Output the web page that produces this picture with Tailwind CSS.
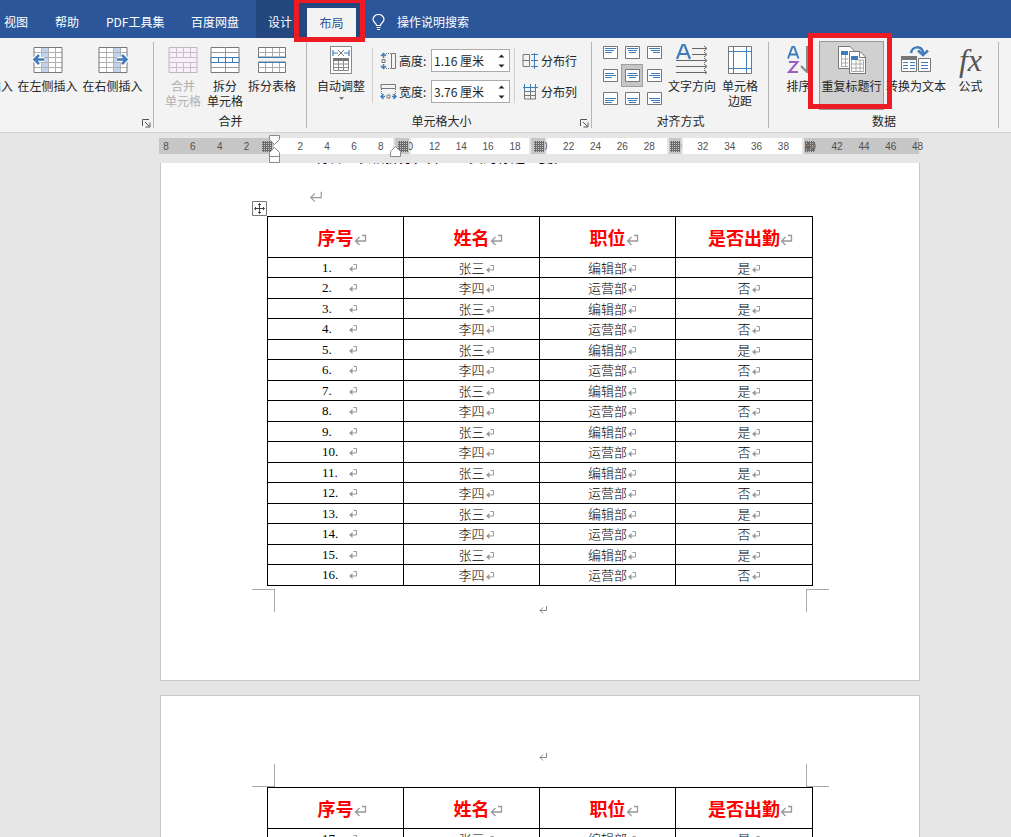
<!DOCTYPE html>
<html lang="zh-CN">
<head>
<meta charset="utf-8">
<title>Word 文档</title>
<script src="https://cdn.jsdelivr.net/npm/@tailwindcss/browser@4"></script>
</head>
<body class="flex h-screen flex-col overflow-hidden bg-[#e6e6e6] font-['Noto_Sans_CJK_SC',sans-serif] text-xs text-[#262626]">

<svg class="hidden" aria-hidden="true">
  <symbol id="ret" viewBox="0 0 10 10"><path d="M5.500 1.500H8.500V6H2" fill="none" stroke="#999"/><path d="M4.500 3L1 6L4.500 9Z" fill="#999"/></symbol>
  <symbol id="bigret" viewBox="0 0 13 12"><path d="M8 1.500H11.500V7H1.500M5.500 3L1.500 7L5.500 11" fill="none" stroke="#999" stroke-width="1.300"/></symbol>
  <symbol id="launch" viewBox="0 0 9 9"><path d="M.5 7V.5H7M3 3L7 7M8 3.500V8H3.500" fill="none" stroke="#555"/></symbol>
</svg>

<header class="relative z-10 flex h-[38px] shrink-0 bg-[#2b579a] text-white">
  <nav class="flex items-center leading-4">
    <a href="#" class="ml-1 w-[51px] pt-1.5">视图</a>
    <a href="#" class="w-[51px] pt-1.5">帮助</a>
    <a href="#" class="w-[85px] pt-1.5 whitespace-nowrap">PDF工具集</a>
    <a href="#" class="w-[65px] pt-1.5 whitespace-nowrap">百度网盘</a>
    <div class="relative flex h-[38px] w-[104px] bg-[#24477f]">
      <a href="#" class="pt-3.5 pl-3">设计</a>
      <a href="#" class="mt-2 ml-[15px] flex h-[29px] w-[49px] items-center justify-center bg-[#f3f3f3] text-[#2b579a]">布局</a>
      <div class="pointer-events-none absolute top-[-2px] left-[38px] h-11 w-[71px] border-5 border-[#ed1c24]"></div>
    </div>
    <a href="#" class="ml-3 flex items-center gap-3 whitespace-nowrap pt-1.5">
      <svg width="13" height="17" viewBox="0 0 13 17" fill="none" stroke="#fff" stroke-width="1.200"><path d="M4.500 11.500C4.500 9 1 8.500 1 5.500A5.500 5 0 0 1 12 5.500C12 8.500 8.500 9 8.500 11.500ZM4.500 13.500H8.500M5 15.500H8"/></svg>
      <span>操作说明搜索</span>
    </a>
  </nav>
</header>

<section class="flex h-[95px] shrink-0 border-b border-[#d2d2d2] bg-[#f3f3f3] leading-[15px] whitespace-nowrap">
  <!-- 行和列 -->
  <div class="relative flex w-[154px] shrink-0 flex-col">
    <div class="flex h-[75px]">
      <button class="flex w-[13px] items-start justify-end pt-10">在下方插入</button>
      <button class="flex w-[69px] flex-col items-center gap-1 pt-2">
        <svg width="30" height="28" viewBox="0 0 30 28"><path fill="#fff" d="M1 1H29V26H1Z"/><path fill="#c0d3ea" d="M8 1H15V26H8Z"/><path d="M8.500 1V26M15.500 1V26M22.500 1V26M1 6.500H29M1 11.500H29M1 16.500H29M1 21.500H29" stroke="#b0b0b0"/><path d="M1 1.500H29V26.500H1Z" fill="none" stroke="#777"/><path d="M11 13.500H2M6 9L1.500 13.500L6 18" fill="none" stroke="#fff" stroke-width="5"/><path d="M11 13.500H2M6 9L1.500 13.500L6 18" fill="none" stroke="#3f7dba" stroke-width="2.500"/></svg>
        <span>在左侧插入</span>
      </button>
      <button class="flex w-[61px] flex-col items-center gap-1 pt-2">
        <svg width="30" height="28" viewBox="0 0 30 28"><path fill="#fff" d="M1 1H29V26H1Z"/><path fill="#c0d3ea" d="M15 1H22V26H15Z"/><path d="M8.500 1V26M15.500 1V26M22.500 1V26M1 6.500H29M1 11.500H29M1 16.500H29M1 21.500H29" stroke="#b0b0b0"/><path d="M1 1.500H29V26.500H1Z" fill="none" stroke="#777"/><path d="M19 13.500H28M24 9L28.500 13.500L24 18" fill="none" stroke="#fff" stroke-width="5"/><path d="M19 13.500H28M24 9L28.500 13.500L24 18" fill="none" stroke="#3f7dba" stroke-width="2.500"/></svg>
        <span>在右侧插入</span>
      </button>
    </div>
    <button class="absolute right-[3px] bottom-1" aria-label="行和列设置"><svg width="9" height="9"><use href="#launch"/></svg></button>
    <div class="absolute top-1 right-0 h-[86px] w-px bg-[#b5b5b5]"></div>
  </div>
  <!-- 合并 -->
  <div class="relative flex w-[153px] shrink-0 flex-col">
    <div class="flex h-[75px] pl-2">
      <button disabled class="flex w-[42px] flex-col items-center gap-1 pt-2 text-[#b1b1b1]">
        <svg width="30" height="28" viewBox="0 0 30 28"><path d="M1 1.500H29V26.500H1Z" fill="#f8f0f8" stroke="#bcb8bc"/><path d="M1 6.500H29M1 11.500H29M1 16.500H29M1 21.500H29M8.500 1V11M15.500 1V11M22.500 1V11M8.500 17V26M15.500 17V26M22.500 17V26" stroke="#c8c0c8"/></svg>
        <span>合并<br>单元格</span>
      </button>
      <button class="flex w-[42px] flex-col items-center gap-1 pt-2">
        <svg width="30" height="28" viewBox="0 0 30 28"><path d="M1 1.500H29V26.500H1Z" fill="#fff" stroke="#777"/><path d="M1 6.500H29M1 21.500H29M15.500 1V11M15.500 17V26" stroke="#999"/><path d="M1 11.500H29V16.500H1ZM8.500 11V17M15.500 11V17M22.500 11V17" fill="#fff" stroke="#3f7dba"/></svg>
        <span>拆分<br>单元格</span>
      </button>
      <button class="flex w-[52px] flex-col items-center gap-1 pt-2">
        <svg width="30" height="28" viewBox="0 0 30 28"><path d="M1.500 1.500H28.500V11H1.500ZM1.500 16H28.500V26.500H1.500Z" fill="#fff" stroke="#777"/><path d="M1.500 6.500H28.500M1.500 21.500H28.500M8.500 2V11M15.500 2V11M22.500 2V11M8.500 17V26M15.500 17V26M22.500 17V26" stroke="#aaa"/><path d="M1 11.500H29M1 16.500H29" stroke="#3f7dba"/></svg>
        <span>拆分表格</span>
      </button>
    </div>
    <div class="text-center leading-4">合并</div>
    <div class="absolute top-1 right-0 h-[86px] w-px bg-[#b5b5b5]"></div>
  </div>
  <!-- 单元格大小 -->
  <div class="relative flex w-[285px] shrink-0 flex-col">
    <div class="flex h-[75px]">
      <button class="ml-2 flex w-[52px] flex-col items-center gap-1 pt-2">
        <svg width="22" height="28" viewBox="0 0 22 28"><path d="M.5 .5H21.500V27.500H.5Z" fill="#fff" stroke="#888"/><path d="M3 4V10M19 4V10M3 7H8M14 7H19" stroke="#3f7dba" stroke-width="1.200"/><path d="M8 4L14 10M14 4L8 10" stroke="#777"/><path fill="#777" d="M3 12H19V15H3Z"/><path d="M3.500 15V24.500H18.500V15M3 18H19M3 21.500H19M8.500 15V24M13.500 15V24" fill="none" stroke="#888"/></svg>
        <span>自动调整</span>
        <svg width="5" height="3"><path d="M0 0H5L2.500 3Z" fill="#777"/></svg>
      </button>
      <div class="mt-2.5 ml-[5px] h-[55px] w-px bg-[#d0d0d0]"></div>
      <div class="ml-[7px] flex w-[130px] flex-col gap-2 pt-[11px]">
        <div class="flex items-center">
          <svg width="17" height="18" viewBox="0 0 17 18" fill="none"><path d="M3.500 1.500V6M3.500 12V16.500M1 4L3.500 1.500L6 4M1 14L3.500 16.500L6 14" stroke="#3f7dba" stroke-width="1.500"/><path d="M2 7.500H5V10.500H2ZM11.500 1.500H15.500V16.500H11.500Z" stroke="#777"/><path d="M6 1.500H11M6 16.500H11" stroke="#777" stroke-dasharray="1 1"/></svg>
          <label for="h" class="ml-0.5 w-8">高度:</label>
          <span class="relative flex h-[23px] w-[79px] border border-[#ababab] bg-white">
            <input id="h" value="1.16 厘米" class="w-full bg-transparent pl-0.5 outline-none">
            <svg class="absolute top-1 right-1" width="7" height="14"><path d="M.5 3.500H6.500L3.500 .5ZM.5 10.500H6.500L3.500 13.500Z" fill="#262626"/></svg>
          </span>
        </div>
        <div class="flex items-center">
          <svg width="17" height="18" viewBox="0 0 17 18" fill="none"><path d="M1 13.500H5M12 13.500H16M3.500 11L1 13.500L3.500 16M13.500 11L16 13.500L13.500 16" stroke="#3f7dba" stroke-width="1.500"/><path d="M1 1.500H15.500V5.500H1ZM7 12H10V15H7Z" stroke="#777"/><path d="M1.500 6V11M15.500 6V11" stroke="#777" stroke-dasharray="1 1"/></svg>
          <label for="w" class="ml-0.5 w-8">宽度:</label>
          <span class="relative flex h-[23px] w-[79px] border border-[#ababab] bg-white">
            <input id="w" value="3.76 厘米" class="w-full bg-transparent pl-0.5 outline-none">
            <svg class="absolute top-1 right-1" width="7" height="14"><path d="M.5 3.500H6.500L3.500 .5ZM.5 10.500H6.500L3.500 13.500Z" fill="#262626"/></svg>
          </span>
        </div>
      </div>
      <div class="mt-2.5 ml-1 h-[55px] w-px bg-[#d0d0d0]"></div>
      <div class="ml-[7px] flex flex-col gap-2 pt-[11px]">
        <button class="flex h-[23px] items-center gap-0.5">
          <svg width="17" height="16" viewBox="0 0 17 16" fill="none"><path d="M1 1.500H7.500V13.500H1ZM1 7.500H8" stroke="#777"/><path d="M12.500 0V16M9 1.500H16M9 7.500H16M9 13.500H16" stroke="#3f7dba"/></svg>分布行</button>
        <button class="flex h-[23px] items-center gap-0.5">
          <svg width="17" height="16" viewBox="0 0 17 16" fill="none"><path d="M2.500 7.500H13.500V15H2.500ZM8.500 8V15M2.500 11.500H13.500" stroke="#777"/><path d="M1 3.500H16M2.500 0V7M8.500 0V7M13.500 0V7" stroke="#3f7dba"/></svg>分布列</button>
      </div>
    </div>
    <div class="pr-4 text-center leading-4">单元格大小</div>
    <button class="absolute right-[3px] bottom-1" aria-label="单元格大小设置"><svg width="9" height="9"><use href="#launch"/></svg></button>
    <div class="absolute top-1 right-0 h-[86px] w-px bg-[#b5b5b5]"></div>
  </div>
  <!-- 对齐方式 -->
  <div class="relative flex w-[177px] shrink-0 flex-col">
    <div class="flex h-[75px] pl-[7px]">
      <div id="align" class="mt-[3px] mr-px grid h-[69px] w-[66px] grid-cols-3 grid-rows-3"></div>
      <button class="flex w-[52px] flex-col items-center gap-1 pt-1.5">
        <svg width="32" height="30" viewBox="0 0 32 30" fill="none"><path d="M1 15L6.500 1H8.500L14 15M3.500 10H11.500" stroke="#3f7dba" stroke-width="2.200"/><path d="M16 4.500H30M16 10.500H30M0 16.500H30M0 22.500H30M0 28.500H30M28 2L31 4.500L28 7M28 8L31 10.500L28 13M28 14L31 16.500L28 19M28 20L31 22.500L28 25M28 26L31 28.500L28 31" stroke="#666"/></svg>
        <span>文字方向</span>
      </button>
      <button class="flex w-11 flex-col items-center gap-1 pt-2">
        <svg width="24" height="28" viewBox="0 0 24 28"><path d="M.5 .5H23.500V27.500H.5Z" fill="#fff" stroke="#777"/><path d="M5.500 1V27M18.500 1V27M1 5.500H23M1 22.500H23" stroke="#3f7dba"/></svg>
        <span>单元格<br>边距</span>
      </button>
    </div>
    <div class="text-center leading-4">对齐方式</div>
    <div class="absolute top-1 right-0 h-[86px] w-px bg-[#b5b5b5]"></div>
  </div>
  <!-- 数据 -->
  <div class="relative flex w-[230px] shrink-0 flex-col">
    <div class="flex h-[75px] pl-3">
      <button class="flex w-[35px] flex-col items-center gap-1 pt-2">
        <svg width="23" height="28" viewBox="0 0 23 28" fill="none"><path d="M1 12.500L5.500 .5H7L11.500 12.500M3 8.500H10" stroke="#3f7dba" stroke-width="2"/><path d="M2 16H10.500L2 26H11" stroke="#9a5fbf" stroke-width="2"/><path d="M20 0V25M14 20L20 26L23 23" stroke="#888" stroke-width="2"/></svg>
        <span>排序</span>
      </button>
      <div class="relative ml-[3px] h-[72px] w-[65px] pt-[3px]">
        <button class="flex h-[69px] w-full flex-col items-center gap-1 border border-[#9a9a9a] bg-[#d0d0d0] pt-1">
          <svg width="28" height="28" viewBox="0 0 28 28"><path d="M.5 .5H12L17.500 6V22.500H.5Z" fill="#fff" stroke="#777"/><path fill="#3f7dba" d="M3 5H10V9H3Z"/><path d="M3.500 9V20.500H10M3 13H10M3 17H10M7.500 9V20" fill="none" stroke="#aaa"/><path d="M11.500 5.500H22L27.500 11V27.500H11.500Z" fill="#fff" stroke="#777"/><path d="M21.500 6V11.500H27" fill="none" stroke="#777"/><path fill="#3f7dba" d="M13 10H20V14H13Z"/><path d="M13.500 14V25.500H25.500V14H20M13 18H26M13 22H26M18 14V25M22 14V25" fill="none" stroke="#aaa"/></svg>
          <span>重复标题行</span>
        </button>
        <div class="pointer-events-none absolute top-[-5px] left-[-11px] z-20 h-[76px] w-[84px] border-5 border-[#ed1c24]"></div>
      </div>
      <button class="flex w-16 flex-col items-center gap-1 pt-2">
        <svg width="30" height="28" viewBox="0 0 30 28" fill="none"><path d="M10 7C11 0 21 -1 22 7M17 4.500L22 9L27 4.500" stroke="#3f7dba" stroke-width="2.500"/><path d="M.5 12V25.500H15.500V12M17.500 12.500H29.500V25.500H17.500Z" fill="#fff" stroke="#777"/><path fill="#777" d="M0 10H16V14H0Z"/><path d="M2 16.500H7M9 16.500H14M2 19.500H7M9 19.500H14M2 22.500H7M9 22.500H14M20 16.500H27M20 19.500H27M20 22.500H27" stroke="#3f7dba"/></svg>
        <span>转换为文本</span>
      </button>
      <button class="flex w-[45px] flex-col items-center gap-1 pt-2">
        <span class="h-7 font-['Liberation_Serif',serif] text-[32px] leading-7 text-[#555] italic">fx</span>
        <span>公式</span>
      </button>
    </div>
    <div class="text-center leading-4">数据</div>
    <div class="absolute top-1 right-0 h-[86px] w-px bg-[#b5b5b5]"></div>
  </div>
</section>

<!-- 标尺 -->
<div class="shrink-0 pt-[5px] pl-[159px] pb-[9px]">
  <div class="relative h-4 w-[760px]">
    <svg class="absolute inset-0" width="760" height="16"><path fill="#c6c6c6" d="M0 0H115V16H0ZM645 0H760V16H645Z"/><path fill="#fff" d="M115 0H234V16H115ZM252 0H370V16H252ZM388 0H508V16H388ZM524 0H643V16H524Z"/></svg>
    <div id="nums" class="absolute -right-[9px] -left-[3px] flex justify-between font-['Liberation_Sans',sans-serif] text-[10px] leading-[17px] text-[#505050]"></div>
    <svg class="absolute top-[-4px] left-0" width="760" height="30" viewBox="0 -4 760 30">
      <defs><pattern id="grip" width="2" height="2" patternUnits="userSpaceOnUse"><path fill="#6a6a6a" d="M0 0H2V1H1V2H0Z"/></pattern></defs>
      <path fill="#c6c6c6" d="M236 0H250V16H236ZM372 0H386V16H372ZM510 0H522V16H510Z"/>
      <path fill="url(#grip)" d="M103 3H113V14H103ZM239 3H249V14H239ZM375 3H385V14H375ZM511 3H521V14H511ZM646 3H656V14H646Z"/>
      <path d="M110.500 -2.500H120.500V1.500L115.500 6.500L110.500 1.500ZM115.500 9.500L120.500 14.500V24.500H110.500V14.500ZM110.500 18.500H120.500M236.500 8.500L241.500 13.500V18.500H231.500V13.500Z" fill="#fff" stroke="#888"/>
    </svg>
  </div>
</div>

<!-- 文档 -->
<main class="flex min-h-0 flex-1 flex-col gap-3.5 overflow-hidden pl-40 font-['Noto_Sans_CJK_SC',serif] text-black">
  <article class="h-[518px] w-[760px] shrink-0 border border-t-0 border-[#c6c6c6] bg-white">
    <div class="flex h-0.5 items-end overflow-hidden pl-[154px] text-sm leading-[18px] whitespace-nowrap">将各个表格拆分，并且一页的标题重复。</div>
    <div class="flex h-[51px] items-end pb-3 pl-[148px]"><svg width="14" height="14" viewBox="0 0 12 12" fill="none" stroke="#999"><path d="M10.500 1.500V6.500H1.500M5 3L1.500 6.500L5 10"/></svg></div>
    <div class="relative px-[106px]">
      <svg class="absolute top-[-15px] left-[91px]" width="15" height="15" fill="none" stroke="#777"><path d="M.5 .5H14.500V14.500H.5Z" fill="#fff"/><path d="M7.500 2.500V12.500M2.500 7.500H12.500M6 4L7.500 2.500L9 4M6 11L7.500 12.500L9 11M4 6L2.500 7.500L4 9M11 6L12.500 7.500L11 9" stroke="#444"/></svg>
      <table class="w-full table-fixed border-collapse text-center text-[13px] leading-4" data-from="1" data-to="16"></table>
    </div>
    <div class="mt-[3px] mr-[90px] ml-[91px] flex h-[23px] justify-between">
      <div class="w-[23px] border-t border-r border-[#aaa]"></div>
      <svg class="mt-4 ml-1.5" width="9" height="9" viewBox="0 0 9 9" fill="none" stroke="#888"><path d="M7.500 1V5.500H1M4 2.500L1 5.500L4 8.500"/></svg>
      <div class="w-[23px] border-t border-l border-[#aaa]"></div>
    </div>
  </article>
  <article class="h-[518px] w-[760px] shrink-0 border border-[#c6c6c6] bg-white pt-14">
    <div class="mt-3 mr-[90px] ml-[91px] flex h-[23px] justify-between">
      <div class="w-[23px] border-r border-b border-[#aaa]"></div>
      <svg class="-mt-3 ml-1.5" width="9" height="9" viewBox="0 0 9 9" fill="none" stroke="#888"><path d="M7.500 1V5.500H1M4 2.500L1 5.500L4 8.500"/></svg>
      <div class="w-[23px] border-b border-l border-[#aaa]"></div>
    </div>
    <div class="px-[106px]">
      <table class="w-full table-fixed border-collapse text-center text-[13px] leading-4" data-from="17" data-to="24"></table>
    </div>
  </article>
</main>

<script>
  const mark = '<span class="inline-block w-0 align-middle"><svg class="max-w-none" width="10" height="10"><use href="#ret"/></svg></span>';
  const bigMark = '<span class="inline-block w-0 align-middle"><svg class="max-w-none" width="13" height="12"><use href="#bigret"/></svg></span>';
  document.querySelectorAll('table').forEach(t => {
    let html = '<colgroup><col class="w-[136px]"><col class="w-[136px]"><col class="w-[136px]"><col></colgroup><thead><tr class="h-[41px]">' + ['序号', '姓名', '职位', '是否出勤'].map(s =>
      '<th class="border border-black p-0 text-lg leading-5 font-bold text-[#ff0000]">' + s + bigMark + '</th>').join('') + '</tr></thead><tbody>';
    for (let i = +t.dataset.from; i <= +t.dataset.to; i++) {
      const odd = i % 2;
      html += '<tr class="' + (odd ? 'h-5' : 'h-[21px]') + '">' +
        '<td class="border border-black p-0"><div class="flex items-center pl-[54px]"><span class="w-[26px] text-left font-[\'Liberation_Serif\',serif]">' + i + '.</span>' + mark + '</div></td>' +
        [odd ? '张三' : '李四', odd ? '编辑部' : '运营部', odd ? '是' : '否'].map(s =>
          '<td class="border border-black p-0 font-light">' + s + mark + '</td>').join('') + '</tr>';
    }
    t.innerHTML = html + '</tbody>';
  });

  let nums = '';
  for (let n = -8; n <= 48; n += 2) nums += '<span class="w-5 text-center">' + (Math.abs(n) || '') + '</span>';
  document.getElementById('nums').innerHTML = nums;

  const names = ['靠上左对齐', '靠上居中', '靠上右对齐', '中部左对齐', '水平居中', '中部右对齐', '靠下左对齐', '靠下居中', '靠下右对齐'];
  document.getElementById('align').innerHTML = names.map((name, k) => {
    const row = Math.floor(k / 3), y = [2.5, 4.5, 6.5][row], c = k % 3;
    const line = (w, dy) => 'M' + (c === 0 ? 2 : c === 1 ? (15 - w) / 2 : 13 - w) + ' ' + (y + dy) + 'h' + w;
    const widths = row === 1 ? [9, 11, 7] : [11, 9, 7];
    return '<button aria-label="' + name + '" class="' + (k === 4 ? 'flex items-center justify-center border border-[#a0a0a0] bg-[#c6c6c6]' : 'flex items-center justify-center') + '">' +
      '<svg class="shrink-0" width="15" height="13"><path d="M.5 .5H14.500V12.500H.5Z" fill="#fff" stroke="#777"/><path d="' + widths.map((w, i) => line(w, i * 2)).join('') + '" stroke="#3f7dba"/></svg></button>';
  }).join('');
</script>
</body>
</html>
